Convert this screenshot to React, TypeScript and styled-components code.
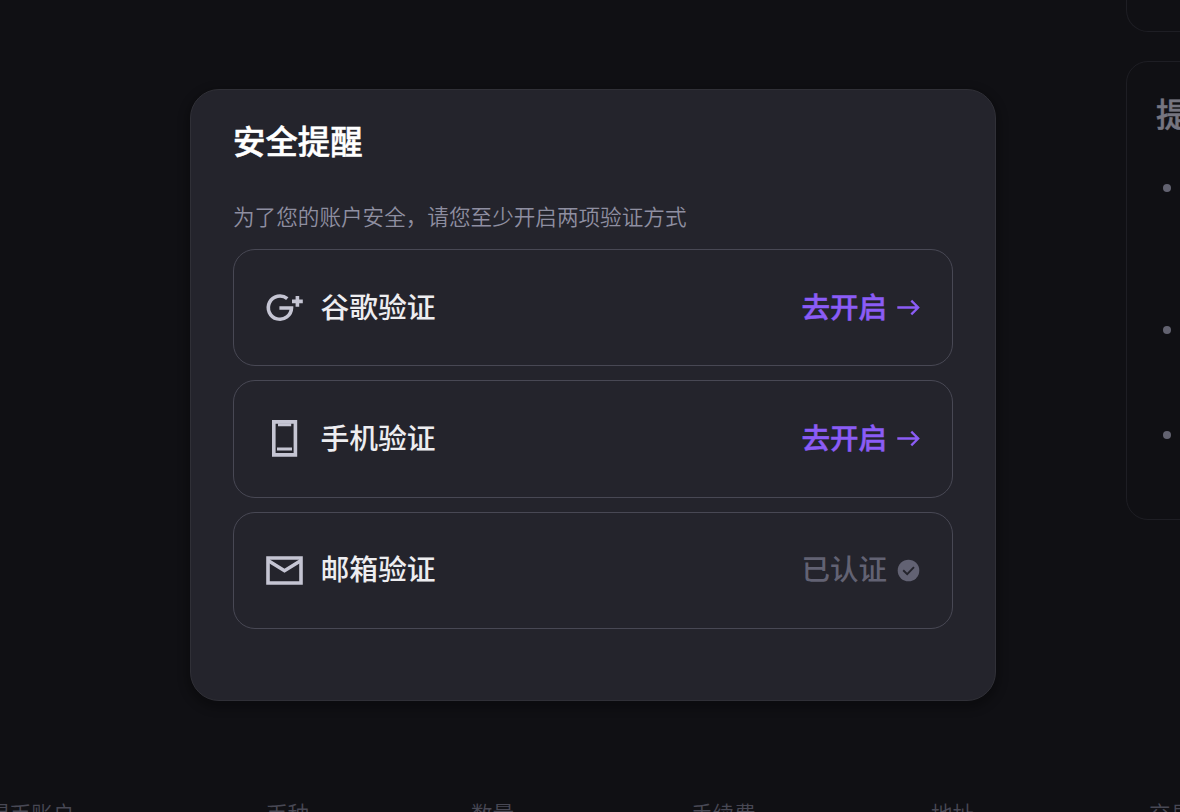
import React from 'react';
import styled, { createGlobalStyle } from 'styled-components';

const GlobalStyle = createGlobalStyle`
  * { box-sizing: border-box; }
  html, body { margin: 0; background: #101014; overflow: hidden; }
  body { font-family: "Noto Sans CJK SC", sans-serif; }
`;

const Screen = styled.div`
  position: relative;
  width: 1180px;
  height: 812px;
  overflow: hidden;
  background: #101014;
`;

const Page = styled.div`
  display: flex;
  flex-direction: column;
  height: 100%;
`;

const Upper = styled.div`
  display: flex;
  justify-content: flex-end;
  flex: 0 0 797px;
`;

const Sidebar = styled.aside`
  display: flex;
  flex-direction: column;
  gap: 29px;
  width: 54px;
`;

const SideCard = styled.section<{ $height: number; $open?: boolean }>`
  flex: none;
  width: 360px;
  height: ${p => p.$height}px;
  padding: ${p => (p.$open ? 0 : '29px')};
  border: 1px solid #1e1e24;
  border-top-width: ${p => (p.$open ? 0 : 1)}px;
  border-radius: ${p => (p.$open ? '0 0 22px 22px' : '22px')};
`;

const SideTitle = styled.h3`
  margin: -2px 0 0;
  font-size: 32.4px;
  line-height: 47px;
  font-weight: 500;
  -webkit-text-stroke: 0.4px;
  color: #757580;
`;

const Tips = styled.ul`
  list-style: none;
  margin: 48px 0 0;
  padding: 0 0 0 7px;
`;

const Tip = styled.li<{ $height: number }>`
  height: ${p => p.$height}px;

  &::before {
    content: '';
    display: block;
    width: 8px;
    height: 8px;
    border-radius: 50%;
    background: #626270;
  }
`;

const TableHead = styled.div`
  display: grid;
  grid-template-columns: 278px 205px 220px 240px 218px 100px;
  flex: none;
  margin-left: -12px;
  font-size: 21.6px;
  line-height: 31px;
  font-weight: 350;
  color: #484854;
  white-space: nowrap;
`;

const Overlay = styled.div`
  position: absolute;
  inset: 0;
  display: flex;
  align-items: flex-start;
  padding: 89px 0 0 190px;
`;

const Dialog = styled.div`
  display: flex;
  flex-direction: column;
  width: 806px;
  height: 612px;
  padding: 26px 42px;
  border: 1px solid #303037;
  border-radius: 29px;
  background: #24242c;
  box-shadow: 0 4px 8px 4px rgba(0, 0, 0, 0.25);
`;

const Title = styled.h2`
  margin: 0;
  font-size: 32.4px;
  line-height: 47px;
  font-weight: 500;
  -webkit-text-stroke: 0.5px;
  color: #fff;
`;

const Hint = styled.p`
  margin: 37px 0 17px;
  font-size: 21.6px;
  line-height: 32px;
  font-weight: 350;
  color: #8f8fa1;
`;

const Methods = styled.div`
  display: flex;
  flex-direction: column;
  gap: 14.2px;
`;

const Method = styled.div`
  display: flex;
  align-items: center;
  height: 117.2px;
  padding: 0 32px 0 29px;
  border: 1px solid #484854;
  border-radius: 22px;
`;

const MethodIcon = styled.svg`
  width: 43px;
  height: 43px;
  flex: none;
  margin-right: 14.4px;
  color: #c5c5d3;
`;

const MethodName = styled.span`
  flex: 1;
  padding-bottom: 4px;
  font-size: 28.8px;
  line-height: 42px;
  font-weight: 500;
  color: #ededf0;
`;

const Status = styled.span<{ $done?: boolean }>`
  display: flex;
  align-items: center;
  gap: 10px;
  color: ${p => (p.$done ? '#626273' : '#8b5cf6')};
  -webkit-text-stroke: ${p => (p.$done ? 0 : 0.5)}px;
`;

const StatusText = styled.span`
  padding-bottom: 4px;
  font-size: 28.5px;
  line-height: 42px;
  font-weight: 500;
`;

const StatusIcon = styled.svg`
  width: 23px;
  height: 23px;
  flex: none;
`;

const GoogleIcon = () => (
  <MethodIcon viewBox="0 0 43 43" fill="none" stroke="currentColor" strokeWidth="3.6">
    <path d="M24.3 12.7A11.6 11.6 0 1 0 28.5 22H16.4" />
    <path d="M29 15.4h10.8M34.4 10v10.8" />
  </MethodIcon>
);

const PhoneIcon = () => (
  <MethodIcon viewBox="0 0 43 43" fill="none" stroke="currentColor" strokeWidth="3.6">
    <path d="M10.8 4.9h21.6v33H10.8z" />
    <path d="M15 7.7h13.2M14 32h15" strokeWidth="3" />
  </MethodIcon>
);

const MailIcon = () => (
  <MethodIcon viewBox="0 0 43 43" fill="none" stroke="currentColor" strokeWidth="3.6">
    <path d="M5 9h33v25H5z" />
    <path d="M5 11.5l16.5 10.2L38 11.5" />
  </MethodIcon>
);

const ArrowIcon = () => (
  <StatusIcon viewBox="0 0 23 23" fill="none" stroke="currentColor" strokeWidth="2.3">
    <path d="M0.3 11.5h21M14.3 4.6l6.9 6.9-6.9 6.9" />
  </StatusIcon>
);

const CheckIcon = () => (
  <StatusIcon viewBox="0 0 23 23" fill="none">
    <circle cx="11.5" cy="11.5" r="10.8" fill="currentColor" />
    <path d="M6.2 11.3l4 3.9 6.8-7" stroke="#24242c" strokeWidth="1.9" />
  </StatusIcon>
);

const methods = [
  { name: '谷歌验证', Icon: GoogleIcon, done: false },
  { name: '手机验证', Icon: PhoneIcon, done: false },
  { name: '邮箱验证', Icon: MailIcon, done: true },
];

const columns = ['提币账户', '币种', '数量', '手续费', '地址', '交易'];

export default function App() {
  return (
    <Screen>
      <GlobalStyle />
      <Page>
        <Upper>
          <Sidebar>
            <SideCard $height={32} $open />
            <SideCard $height={459}>
              <SideTitle>提示</SideTitle>
              <Tips>
                <Tip $height={142} />
                <Tip $height={105} />
                <Tip $height={40} />
              </Tips>
            </SideCard>
          </Sidebar>
        </Upper>
        <TableHead>
          {columns.map(c => (
            <span key={c}>{c}</span>
          ))}
        </TableHead>
      </Page>
      <Overlay>
        <Dialog role="dialog">
          <Title>安全提醒</Title>
          <Hint>为了您的账户安全，请您至少开启两项验证方式</Hint>
          <Methods>
            {methods.map(({ name, Icon, done }) => (
              <Method key={name}>
                <Icon />
                <MethodName>{name}</MethodName>
                <Status $done={done}>
                  <StatusText>{done ? '已认证' : '去开启'}</StatusText>
                  {done ? <CheckIcon /> : <ArrowIcon />}
                </Status>
              </Method>
            ))}
          </Methods>
        </Dialog>
      </Overlay>
    </Screen>
  );
}
